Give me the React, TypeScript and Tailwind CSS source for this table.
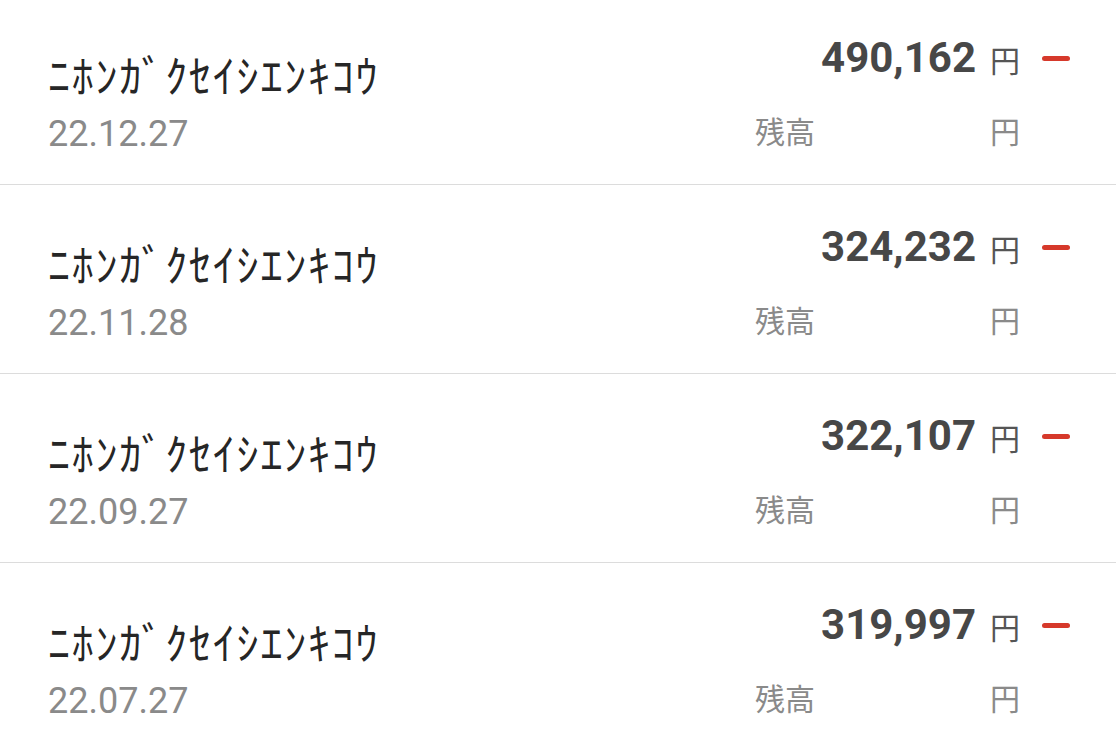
const rows = [
  { date: '22.12.27', amount: '490,162' },
  { date: '22.11.28', amount: '324,232' },
  { date: '22.09.27', amount: '322,107' },
  { date: '22.07.27', amount: '319,997' },
]

const cjk = "font-['Roboto','Noto_Sans_CJK_JP',sans-serif]"

export default function App() {
  return (
    <div className="w-[1116px] h-[744px] overflow-hidden bg-white">
      <div className="-mt-[4px]">
        {rows.map((r) => (
          <div key={r.date} className="h-[189px] border-b border-[#dcdcdc] flex justify-between pl-[48px] pr-[46px]">
            {/* left: name + date */}
            <div className="pt-[52px] flex flex-col">
              <div className="font-['Noto_Sans_CJK_JP',sans-serif] font-normal text-[44px] leading-[52px] tracking-[1.8px] text-[#262626]">
                ﾆﾎﾝｶﾞｸｾｲｼｴﾝｷｺｳ
              </div>
              <div className={`mt-[12px] ${cjk} text-[36px] leading-[44px] text-[#8a8a8a]`}>
                {r.date}
              </div>
            </div>

            {/* right: amount + balance */}
            <div className="pt-[38px] flex items-start">
              <div className="w-[265px] flex flex-col">
                <div className="flex items-baseline justify-end gap-[14px] h-[48px] leading-[48px]">
                  <span className={`${cjk} font-bold text-[42px] text-[#474747]`}>{r.amount}</span>
                  <span className={`${cjk} text-[30px] text-[#555555]`}>円</span>
                </div>
                <div className={`mt-[31px] flex justify-between ${cjk} text-[30px] leading-[40px] text-[#8a8a8a]`}>
                  <span>残高</span>
                  <span>円</span>
                </div>
              </div>
              <div className="ml-[22px] mt-[22px] w-[28px] h-[5px] rounded-full bg-[#d6392b]" />
            </div>
          </div>
        ))}
      </div>
    </div>
  )
}
